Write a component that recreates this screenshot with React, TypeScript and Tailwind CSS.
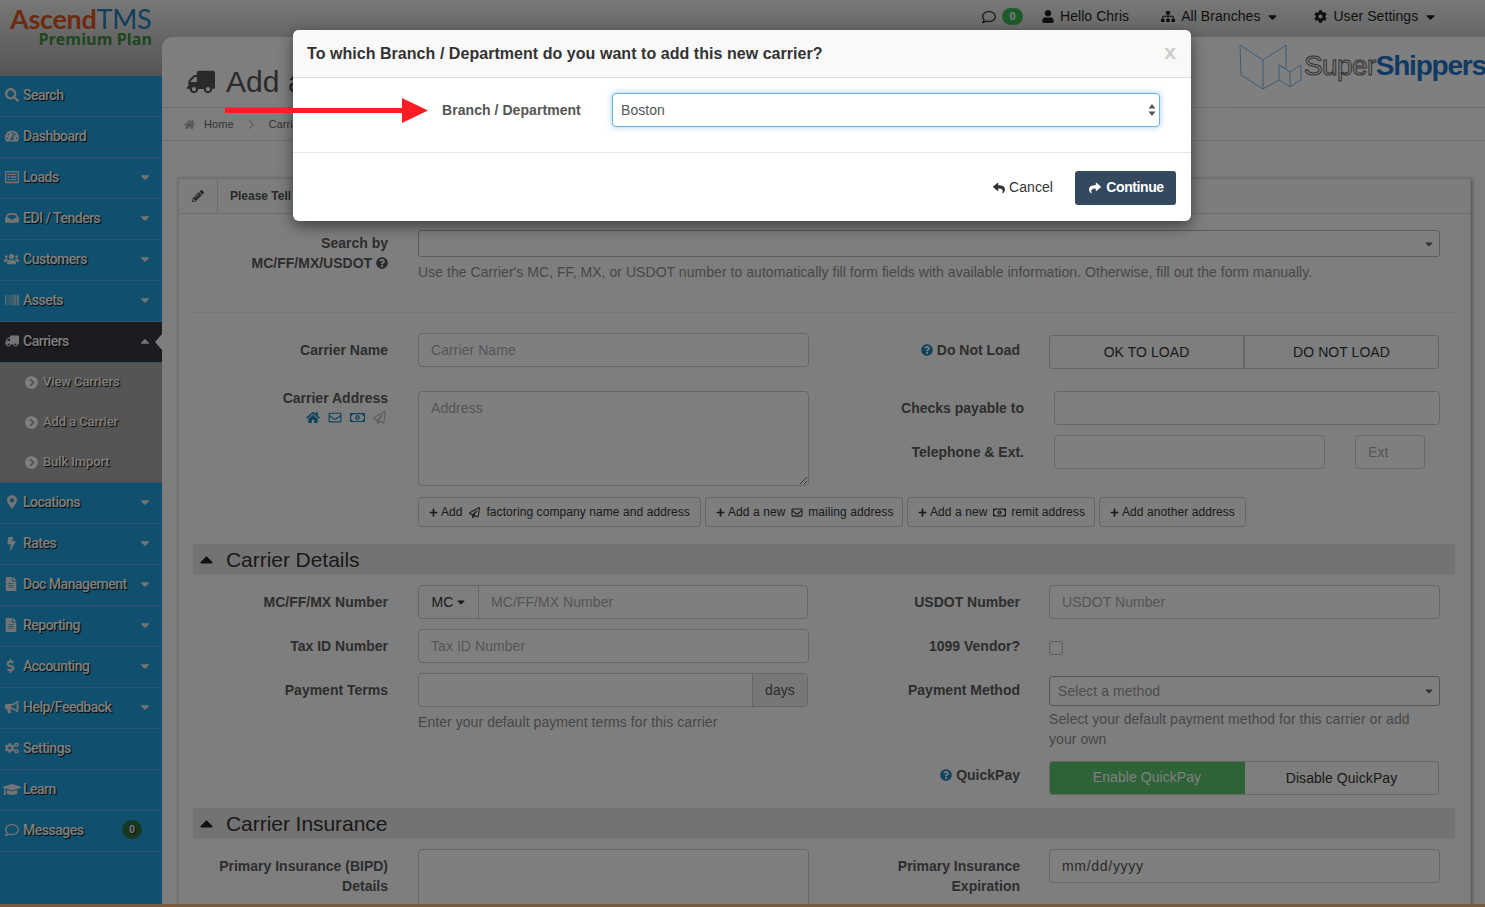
import React from "react";
import {
  FaSearch, FaTachometerAlt, FaRegListAlt, FaInbox, FaUsers, FaBarcode, FaTruck, FaCaretDown, FaCaretUp,
  FaChevronCircleRight, FaMapMarkerAlt, FaBolt, FaFileAlt, FaDollarSign, FaBullhorn, FaCogs, FaGraduationCap,
  FaRegComment, FaQuestionCircle, FaHome, FaRegEnvelope, FaRegMoneyBillAlt, FaRegPaperPlane, FaPencilAlt,
  FaPlus, FaReply, FaShare, FaUser, FaSitemap, FaCog,
} from "react-icons/fa";
import { ChevronRight } from "lucide-react";

const sans = "font-['Liberation_Sans',Arial,sans-serif]";
const side = "font-['Roboto',sans-serif]";
const inputCls =
  "block h-[34px] rounded-[4px] border border-[#ccc] bg-white px-3 text-[14px] text-[#555] placeholder:text-[#aaa] outline-none";

function MenuItem({ icon, label, caret, up, badge, active }: { icon: React.ReactNode; label: string; caret?: boolean; up?: boolean; badge?: boolean; active?: boolean }) {
  return (
    <div className={`relative flex h-[41px] shrink-0 items-center border-b border-[#6f9fe0] pb-[2px] pl-[5px] text-[14px] font-medium tracking-[-0.5px] text-white [text-shadow:1px_1px_1px_#000] ${active ? "bg-[#383840]" : ""}`}>
      <span className="flex w-[18px] justify-start text-[#e8e8e8]">{icon}</span>
      <span>{label}</span>
      {caret && (
        <span className="absolute left-[138px] top-[12px] text-[14px] text-[#e8e8e8]">{up ? <FaCaretUp /> : <FaCaretDown />}</span>
      )}
      {badge && (
        <span className="absolute left-[122px] top-[9px] flex h-[19px] w-[20px] items-center justify-center rounded-full bg-[#2f6f45] text-[10px] font-bold tracking-normal">0</span>
      )}
      {active && (
        <span className="absolute right-0 top-[12px] h-0 w-0 border-y-[8px] border-r-[7px] border-y-transparent border-r-[#fcfcfc]" />
      )}
    </div>
  );
}

function SubItem({ label }: { label: string }) {
  return (
    <div className="flex h-[40px] items-center pb-[2px] pl-[25px] text-[13px] font-medium tracking-[-0.1px] text-white [text-shadow:1px_1px_1px_#000]">
      <FaChevronCircleRight className="mr-[5px] h-[13px] w-[13px] text-white" />
      {label}
    </div>
  );
}

function Sidebar() {
  const i = "h-[14px] w-[14px]";
  return (
    <aside className={`flex w-[162px] shrink-0 flex-col ${side}`}>
      <div className="h-[76px] shrink-0 pl-[10px] pt-[5px]">
        <div className="flex h-[28px] items-baseline font-['Lato',sans-serif] text-[27px] leading-[28px] tracking-[-0.3px]">
          <span className="font-bold text-[#d8561f]">Ascend</span>
          <span className="text-[#1f7fb5]">TMS</span>
        </div>
        <div className="w-[142px] text-right font-['Open_Sans',sans-serif] text-[16px] font-bold leading-[13px] text-[#3f8a3c]">Premium Plan</div>
      </div>
      <nav className="flex flex-1 flex-col bg-[#20a0dc]">
        <MenuItem icon={<FaSearch className={i} />} label="Search" />
        <MenuItem icon={<FaTachometerAlt className={i} />} label="Dashboard" />
        <MenuItem icon={<FaRegListAlt className={i} />} label="Loads" caret />
        <MenuItem icon={<FaInbox className={i} />} label="EDI / Tenders" caret />
        <MenuItem icon={<FaUsers className="-ml-px h-[14px] w-[15px]" />} label="Customers" caret />
        <MenuItem icon={<FaBarcode className={i} />} label="Assets" caret />
        <MenuItem icon={<FaTruck className={`${i} -scale-x-100`} />} label="Carriers" caret up active />
        <div className="h-[120px] shrink-0 border-b border-[#6f9fe0] bg-[#aaa]">
          <SubItem label="View Carriers" />
          <SubItem label="Add a Carrier" />
          <SubItem label="Bulk Import" />
        </div>
        <MenuItem icon={<FaMapMarkerAlt className="ml-[2px] h-[14px] w-[10px]" />} label="Locations" caret />
        <MenuItem icon={<FaBolt className="ml-[2px] h-[13px] w-[9px]" />} label="Rates" caret />
        <MenuItem icon={<FaFileAlt className="h-[14px] w-[12px]" />} label="Doc Management" caret />
        <MenuItem icon={<FaFileAlt className="h-[14px] w-[12px]" />} label="Reporting" caret />
        <MenuItem icon={<FaDollarSign className="ml-[1px] h-[14px] w-[9px]" />} label="Accounting" caret />
        <MenuItem icon={<FaBullhorn className={i} />} label="Help/Feedback" caret />
        <MenuItem icon={<FaCogs className={i} />} label="Settings" />
        <MenuItem icon={<FaGraduationCap className="-ml-[2px] h-[15px] w-[18px]" />} label="Learn" />
        <MenuItem icon={<FaRegComment className={i} />} label="Messages" badge />
      </nav>
    </aside>
  );
}

function TopBar() {
  return (
    <div className="flex h-[37px] shrink-0 items-center pb-[4px] pl-[821px] text-[14px] text-[#1f1f1f]">
      <FaRegComment className="ml-[-1px] h-[14px] w-[14px] text-[#333]" />
      <span className="ml-[6px] flex h-[17px] w-[21px] items-center justify-center rounded-full bg-[#3cb454] text-[11px] font-bold text-white">0</span>
      <FaUser className="ml-[19px] h-[13px] w-[12px]" />
      <span className="ml-[6px]">Hello Chris</span>
      <FaSitemap className="ml-[32px] h-[13px] w-[14px]" />
      <span className="ml-[6px]">All Branches</span>
      <FaCaretDown className="ml-[8px] h-[14px] w-[9px]" />
      <FaCog className="ml-[37px] h-[13px] w-[13px]" />
      <span className="ml-[6px]">User Settings</span>
      <FaCaretDown className="ml-[8px] h-[14px] w-[9px]" />
    </div>
  );
}

function Boxes() {
  return (
    <svg viewBox="0 0 65 50" className="h-[50px] w-[65px] shrink-0" fill="none" stroke="#7fb6ee" strokeWidth="1">
      <path d="M1 3 L24 18 L47 3 L47 27 M1 3 L2 33 L24 47 L40 38 M24 18 L24 47" />
      <path d="M40 23 L51 30 L62 23 L62 38 L51 45 L40 38 Z M51 30 L51 45 M47 27 L40 23" />
    </svg>
  );
}

function Label({ children, w = "w-[195px]", pt = "pt-[7px]" }: { children: React.ReactNode; w?: string; pt?: string }) {
  return <div className={`${w} ${pt} shrink-0 text-right text-[14px] font-bold leading-[20px] tracking-normal text-[#5a5a5a]`}>{children}</div>;
}

const Q = () => <FaQuestionCircle className="mr-[4px] inline h-[12px] w-[12px] align-[-1px] text-[#1f86b8]" />;

function AddBtn({ w, children }: { w: string; children: React.ReactNode }) {
  return (
    <div className={`${w} flex h-[30px] items-center whitespace-pre rounded-[3px] border border-[#ccc] pl-[10px] text-[12px] tracking-[0.08px] text-[#333]`}>
      <FaPlus className="mr-[3px] h-[9px] w-[9px]" />
      {children}
    </div>
  );
}

function SectionHead({ title }: { title: string }) {
  return (
    <div className="flex h-[31px] w-[1262px] items-center border-b border-[#eee] bg-[#e6e6e6] pl-[7px] pt-[1px] text-[21px] tracking-[-0.05px] text-[#333]">
      <FaCaretUp className="mr-[13px] h-[21px] w-[13px] text-[#222]" />
      {title}
    </div>
  );
}

function Panel() {
  return (
    <div className="ml-[16px] mt-[37px] h-[800px] w-[1293px] border border-[#e0e0e0] bg-[#fdfdfd] shadow-[1px_1px_4px_rgba(0,0,0,0.4)]">
      <div className="flex h-[35px] items-center border-b border-[#ddd] bg-[#fafafa]">
        <div className="flex h-full w-[39px] items-center justify-center border-r border-[#ddd] text-[#555]">
          <FaPencilAlt className="h-[12px] w-[12px]" />
        </div>
        <span className="ml-[12px] text-[12px] font-bold tracking-normal text-[#555]">Please Tell Us About This Carrier</span>
      </div>

      <div className="px-[14px] pt-[16px]">
        <div className="flex gap-[30px]">
          <Label pt="pt-[3px]">
            Search by<br />MC/FF/MX/USDOT <FaQuestionCircle className="inline h-[12px] w-[12px] align-[-1px] text-[#555]" />
          </Label>
          <div className="w-[1022px]">
            <div className="flex h-[27px] items-center justify-end rounded-[3px] border border-[#bbb] bg-white pr-[6px]">
              <FaCaretDown className="h-[12px] w-[8px] text-[#666]" />
            </div>
            <p className="mt-[5px] text-[14px] leading-[20px] tracking-[0.045px] text-[#8f8f8f]">
              Use the Carrier's MC, FF, MX, or USDOT number to automatically fill form fields with available information. Otherwise, fill out the form manually.
            </p>
          </div>
        </div>
        <div className="mb-[20px] mt-[30px] h-px bg-[#eee]" />

        <div className="flex">
          <div className="w-[616px]">
            <div className="flex gap-[30px]">
              <Label>Carrier Name</Label>
              <input className={`${inputCls} w-[391px]`} placeholder="Carrier Name" />
            </div>
            <div className="mt-[24px] flex gap-[30px]">
              <div className="w-[195px]">
                <Label pt="-mt-[3px]">Carrier Address</Label>
                <div className="mr-[2px] mt-[3px] flex justify-end gap-[8px] text-[#1f86b8]">
                  <FaHome className="h-[13px] w-[14px]" />
                  <FaRegEnvelope className="h-[13px] w-[14px]" />
                  <FaRegMoneyBillAlt className="h-[13px] w-[15px]" />
                  <FaRegPaperPlane className="h-[13px] w-[13px] text-[#bbb]" />
                </div>
              </div>
              <textarea className={`${inputCls} h-[95px] w-[391px] resize-y pt-[6px]`} placeholder="Address" />
            </div>
          </div>
          <div className="w-[631px]">
            <div className="flex gap-[29px] pt-[2px]">
              <Label w="w-[211px]" pt="pt-[5px]"><Q />Do Not Load</Label>
              <div className="flex h-[34px] w-[390px] rounded-[3px] border border-[#ccc] text-center text-[14px] leading-[32px] text-[#333]">
                <div className="w-[195px] border-r-2 border-[#ccc]">OK TO LOAD</div>
                <div className="flex-1">DO NOT LOAD</div>
              </div>
            </div>
            <div className="mt-[22px] flex gap-[30px]">
              <Label w="w-[215px]">Checks payable to</Label>
              <input className={`${inputCls} w-[386px]`} />
            </div>
            <div className="mt-[10px] flex gap-[30px]">
              <Label w="w-[215px]">Telephone &amp; Ext.</Label>
              <input className={`${inputCls} w-[271px]`} />
              <input className={`${inputCls} w-[70px]`} placeholder="Ext" />
            </div>
          </div>
        </div>

        <div className="ml-[225px] mt-[11px] flex gap-[4px]">
          <AddBtn w="w-[283px]">Add <FaRegPaperPlane className="mx-[3px] h-[11px] w-[11px]" /> factoring company name and address</AddBtn>
          <AddBtn w="w-[198px]">Add a new <FaRegEnvelope className="mx-[2px] h-[11px] w-[12px]" /> mailing address</AddBtn>
          <AddBtn w="w-[188px]">Add a new <FaRegMoneyBillAlt className="mx-[2px] h-[11px] w-[13px]" /> remit address</AddBtn>
          <AddBtn w="w-[147px]">Add another address</AddBtn>
        </div>

        <div className="mt-[17px]"><SectionHead title="Carrier Details" /></div>

        <div className="mt-[10px] flex">
          <div className="w-[616px]">
            <div className="flex gap-[30px]">
              <Label>MC/FF/MX Number</Label>
              <div className="flex h-[34px] w-[390px] rounded-[4px] border border-[#ccc]">
                <div className="flex w-[60px] items-center justify-center gap-[4px] border-r border-[#ccc] text-[14px] text-[#333]">
                  MC <FaCaretDown className="h-[12px] w-[8px]" />
                </div>
                <input className="min-w-0 flex-1 rounded-r-[4px] bg-white px-3 text-[14px] outline-none placeholder:text-[#aaa]" placeholder="MC/FF/MX Number" />
              </div>
            </div>
            <div className="mt-[10px] flex gap-[30px]">
              <Label>Tax ID Number</Label>
              <input className={`${inputCls} w-[391px]`} placeholder="Tax ID Number" />
            </div>
            <div className="mt-[10px] flex gap-[30px]">
              <Label>Payment Terms</Label>
              <div className="w-[390px]">
                <div className="flex h-[34px] rounded-[4px] border border-[#ccc]">
                  <input className="min-w-0 flex-1 rounded-l-[4px] bg-white outline-none" />
                  <div className="flex w-[55px] items-center justify-center rounded-r-[4px] border-l border-[#ccc] bg-[#eee] text-[14px] text-[#555]">days</div>
                </div>
                <p className="mt-[5px] text-[14px] leading-[20px] text-[#8f8f8f]">Enter your default payment terms for this carrier</p>
              </div>
            </div>
          </div>
          <div className="w-[631px]">
            <div className="flex gap-[29px]">
              <Label w="w-[211px]">USDOT Number</Label>
              <input className={`${inputCls} w-[391px]`} placeholder="USDOT Number" />
            </div>
            <div className="mt-[10px] flex h-[34px] gap-[29px]">
              <Label w="w-[211px]">1099 Vendor?</Label>
              <span className="mt-[12px] block h-[14px] w-[14px] rounded-[3px] border border-[#bbb] bg-white" />
            </div>
            <div className="mt-[13px] flex gap-[29px]">
              <Label w="w-[211px]" pt="pt-[4px]">Payment Method</Label>
              <div className="w-[391px]">
                <div className="flex h-[30px] items-center justify-between rounded-[3px] border border-[#aaa] bg-white pl-[8px] pr-[6px] text-[14px] text-[#999]">
                  Select a method
                  <FaCaretDown className="h-[12px] w-[8px] text-[#666]" />
                </div>
                <p className="mt-[3px] w-[370px] text-[14px] leading-[20px] text-[#8f8f8f]">Select your default payment method for this carrier or add your own</p>
              </div>
            </div>
            <div className="mt-[12px] flex gap-[29px]">
              <Label w="w-[211px]" pt="pt-[4px]"><Q />QuickPay</Label>
              <div className="flex h-[34px] w-[390px] overflow-hidden rounded-[3px] border border-[#ccc] text-center text-[14px] leading-[32px] text-[#333]">
                <div className="-my-px -ml-px w-[196px] bg-[#5cc46e] text-white">Enable QuickPay</div>
                <div className="flex-1">Disable QuickPay</div>
              </div>
            </div>
          </div>
        </div>

        <div className="mt-[13px]"><SectionHead title="Carrier Insurance" /></div>

        <div className="mt-[10px] flex">
          <div className="flex w-[616px] gap-[30px]">
            <Label>Primary Insurance (BIPD) Details</Label>
            <div className="h-[95px] w-[391px] rounded-[4px] border border-[#ccc] bg-white" />
          </div>
          <div className="flex gap-[29px]">
            <Label w="w-[211px]">Primary Insurance<br />Expiration</Label>
            <input className={`${inputCls} w-[391px] tracking-[0.7px] text-[#555]`} defaultValue="mm/dd/yyyy" />
          </div>
        </div>
      </div>
    </div>
  );
}

function Main() {
  return (
    <main className="flex min-w-0 flex-1 flex-col">
      <TopBar />
      <div className="min-h-0 flex-1 overflow-hidden rounded-tl-[10px] bg-[#fcfcfc]">
        <header className="flex h-[71px] justify-between border-b border-[#ddd]">
          <div className="flex items-center pl-[25px] pt-[19px] text-[#444]">
            <FaTruck className="mr-[11px] h-[28px] w-[28px] -scale-x-100 text-[#555]" />
            <h1 className="text-[30px] font-normal text-[#555]">Add a New Carrier</h1>
          </div>
          <div className="flex w-[246px] items-start bg-white pl-0 pt-[5px]">
            <Boxes />
            <div className="mt-[7px] whitespace-nowrap text-[28px] font-bold leading-[34px]">
              <span className="font-normal tracking-[-0.6px] text-white [-webkit-text-stroke:1px_#666]">Super</span>
              <span className="tracking-[-1.2px] text-[#1f75cc]">Shippers</span>
            </div>
          </div>
        </header>
        <div className="flex h-[33px] items-center border-b border-[#ddd] pl-[22px] text-[11px] text-[#666]">
          <FaHome className="h-[11px] w-[11px] text-[#aaa]" />
          <span className="ml-[9px]">Home</span>
          <ChevronRight className="ml-[10px] h-[15px] w-[15px] text-[#888]" strokeWidth={1.5} />
          <span className="ml-[10px]">Carriers</span>
        </div>
        <Panel />
      </div>
    </main>
  );
}

function Modal() {
  return (
    <div className="absolute inset-0 bg-black/50">
      <div className="ml-[293px] mt-[30px] flex h-[191px] w-[898px] flex-col rounded-[6px] bg-white shadow-[0_5px_15px_rgba(0,0,0,0.5)]">
        <div className="flex h-[48px] items-center justify-between rounded-t-[6px] border-b border-[#ddd] bg-[#f9f9f9] pl-[14px] pr-[15px]">
          <h4 className="mt-[1px] text-[16px] font-bold tracking-[0.045px] text-[#333]">To which Branch / Department do you want to add this new carrier?</h4>
          <span className="-mt-[4px] text-[21px] font-bold text-[#ccc]">x</span>
        </div>
        <div className="flex h-[75px] border-b border-[#e5e5e5] pl-[149px] pt-[15px]">
          <div className="w-[170px] pt-[7px] text-[14px] font-bold leading-[20px] text-[#555]">Branch / Department</div>
          <div className="relative h-[34px] w-[548px]">
            <select className="h-full w-full appearance-none rounded-[4px] border border-[#66afe9] bg-white pl-[8px] text-[14px] text-[#555] shadow-[0_0_6px_rgba(102,175,233,0.6)] outline-none">
              <option>Boston</option>
            </select>
            <svg viewBox="0 0 8 14" className="absolute right-[4px] top-[10px] h-[14px] w-[8px]" fill="#555">
              <path d="M4 1 L7.5 5.5 H0.5 Z M4 13 L0.5 8.5 H7.5 Z" />
            </svg>
          </div>
        </div>
        <div className="flex flex-1 items-center justify-end pt-[1px] pr-[15px]">
          <FaReply className="h-[12px] w-[14px] text-[#333]" />
          <span className="ml-[3px] text-[14px] text-[#333]">Cancel</span>
          <div className="ml-[22px] flex h-[34px] w-[101px] items-center justify-center rounded-[3px] bg-[#34495e] pl-[1px] text-[14px] font-bold tracking-[-0.4px] text-white">
            <FaShare className="mr-[4px] h-[12px] w-[14px]" />
            Continue
          </div>
        </div>
      </div>
      <svg viewBox="0 0 204 26" className="absolute left-[225px] top-[98px] h-[26px] w-[204px]" fill="#fc1c24">
        <path d="M0 10 H177 V0 L203 12.5 L177 25 V15 H0 Z" />
      </svg>
    </div>
  );
}

export default function App() {
  return (
    <div className={`relative h-[907px] w-full overflow-hidden tracking-[0.06px] ${sans}`}>
      <div className="flex h-[904px] bg-[linear-gradient(#f0f0f0,#a8a8a8_76px,#a8a8a8)]">
        <Sidebar />
        <Main />
      </div>
      <div className="h-[3px] bg-[#f0b880]" />
      <Modal />
    </div>
  );
}
